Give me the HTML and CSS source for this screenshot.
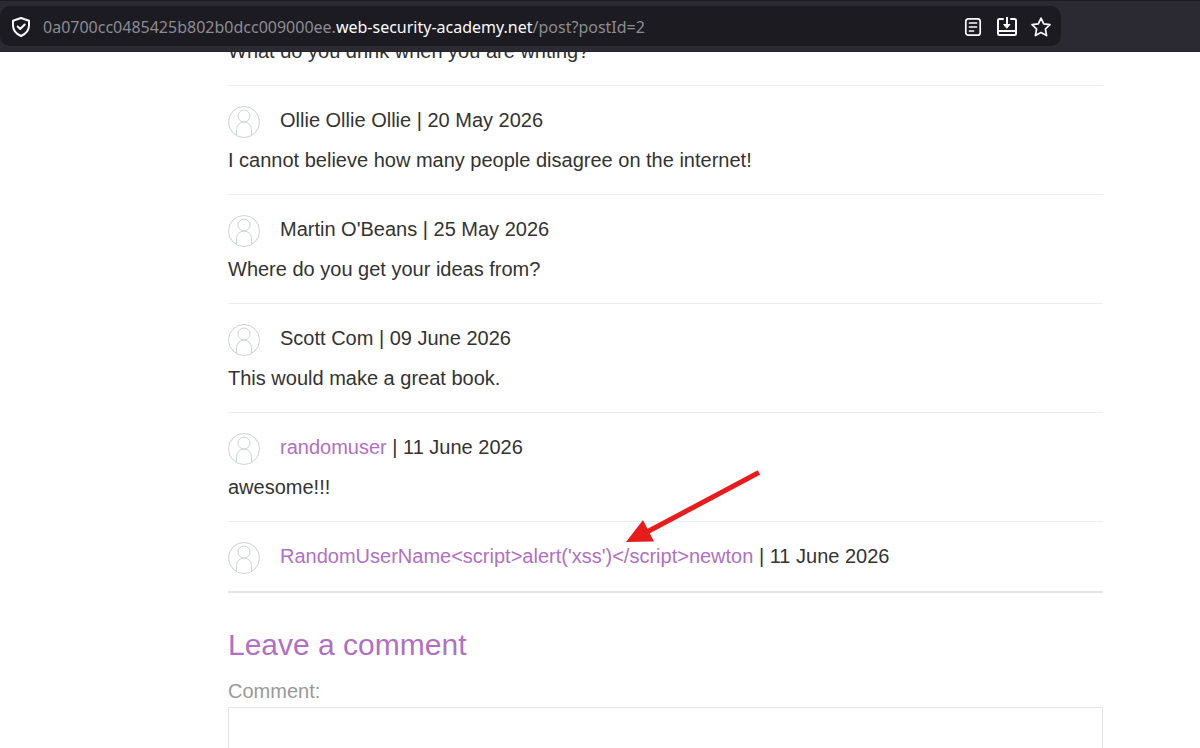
FILE: index.html
```html
<!DOCTYPE html>
<html lang="en">
<head>
    <meta charset="UTF-8">
    <meta name="viewport" content="width=device-width, initial-scale=1.0">
    <title>Blog post</title>
    <link rel="stylesheet" href="styles.css">
</head>
<body>
    <svg class="sprite" aria-hidden="true">
        <symbol id="avatar" viewBox="0 0 32 32">
            <circle cx="16" cy="16" r="15.500"/>
            <circle cx="16" cy="10" r="6"/>
            <path d="M8.500 29.500V23.500a7.500 7.500 0 0 1 15 0V29.500"/>
        </symbol>
    </svg>

    <header class="toolbar">
        <div class="address-bar">
            <button class="icon-button" type="button" aria-label="Site information">
                <svg width="20" height="20" viewBox="0 0 20 20" stroke-width="2">
                    <path d="M10 1L18 3.800V8.500C18 13.500 14.500 17 10 19C5.500 17 2 13.500 2 8.500V3.800Z"/>
                    <path d="M6.700 9.500L9.200 12L13.700 7.500"/>
                </svg>
            </button>
            <div class="url">0a0700cc0485425b802b0dcc009000ee.<span class="domain">web-security-academy.net</span>/post?postId=2</div>
            <div class="actions">
                <button class="icon-button" type="button" aria-label="Reader view">
                    <svg width="20" height="20" viewBox="0 0 20 20" stroke-width="1.700">
                        <rect x="2.800" y="1.800" width="14.400" height="16.400" rx="2.500"/>
                        <path d="M6.500 6H13.500M6.500 10H13.500M6.500 14H10.500"/>
                    </svg>
                </button>
                <button class="icon-button" type="button" aria-label="Save page">
                    <svg width="20" height="20" viewBox="0 0 20 20" stroke-width="2">
                        <path d="M6 2H2.500Q1 2 1 3.500V16.500Q1 18 2.500 18H17.500Q19 18 19 16.500V3.500Q19 2 17.500 2H14"/>
                        <path d="M1 14H19M10 0V8"/>
                        <path d="M7 7.500H13L10 11Z" fill="currentColor" stroke-width="1"/>
                    </svg>
                </button>
                <button class="icon-button" type="button" aria-label="Bookmark this page">
                    <svg width="20" height="20" viewBox="0 0 20 20" stroke-width="1.700">
                        <path d="M10 1.200L12.700 6.800L19 7.600L14.400 12L15.600 18.600L10 15.600L4.400 18.600L5.600 12L1 7.600L7.300 6.800Z"/>
                    </svg>
                </button>
            </div>
        </div>
    </header>

    <main class="page">
        <section class="comments">
            <article class="comment">
                <p>What do you drink when you are writing?</p>
            </article>
            <article class="comment">
                <div class="author"><svg class="avatar"><use href="#avatar"/></svg><span>Ollie Ollie Ollie | 20 May 2026</span></div>
                <p>I cannot believe how many people disagree on the internet!</p>
            </article>
            <article class="comment">
                <div class="author"><svg class="avatar"><use href="#avatar"/></svg><span>Martin O'Beans | 25 May 2026</span></div>
                <p>Where do you get your ideas from?</p>
            </article>
            <article class="comment">
                <div class="author"><svg class="avatar"><use href="#avatar"/></svg><span>Scott Com | 09 June 2026</span></div>
                <p>This would make a great book.</p>
            </article>
            <article class="comment">
                <div class="author"><svg class="avatar"><use href="#avatar"/></svg><span><a href="#">randomuser</a> | 11 June 2026</span></div>
                <p>awesome!!!</p>
            </article>
            <article class="comment last">
                <div class="author"><svg class="avatar"><use href="#avatar"/></svg><span><a href="#">RandomUserName&lt;script&gt;alert('xss')&lt;/script&gt;newton</a> | 11 June 2026</span></div>
                <svg class="arrow" width="134" height="74" viewBox="0 0 134 74" aria-hidden="true">
                    <path d="M133 2.500L19 63" stroke="#e81c1c" stroke-width="5"/>
                    <path d="M0 72L17 50L28 71.500Z" fill="#e81c1c"/>
                </svg>
            </article>
        </section>

        <form class="comment-form">
            <h2>Leave a comment</h2>
            <label for="comment">Comment:</label>
            <textarea id="comment" name="comment" rows="12"></textarea>
        </form>
    </main>
</body>
</html>
```

FILE: styles.css
```css
/* General styles */
* {
    margin: 0;
    padding: 0;
    box-sizing: border-box;
}

body {
    display: flex;
    flex-direction: column;
    height: 100vh;
    overflow: hidden;
    font-family: Arial, "Liberation Sans", sans-serif;
    font-size: 20px;
    line-height: 28px;
    color: #333332;
    background-color: #fff;
}

a {
    color: #b070c4;
    text-decoration: none;
}

.sprite {
    display: none;
}

/* Browser bar */
.toolbar {
    flex: none;
    padding: 5px 139px 5px 0;
    background-color: #2b2a33;
    border-top: 1px solid #1c1b22;
    border-bottom: 1px solid #25242c;
}

.address-bar {
    display: flex;
    align-items: center;
    gap: 12px;
    height: 40px;
    padding: 2px 10px 0 11px;
    background-color: #1c1b22;
    border-radius: 10px;
}

.url {
    flex: 1;
    font-family: "Segoe UI", "Noto Sans", sans-serif;
    font-size: 16px;
    white-space: nowrap;
    color: #8c8c91;
}

.domain {
    color: #fbfbfe;
}

.actions {
    display: flex;
    gap: 14px;
}

.icon-button {
    display: flex;
    border: none;
    background: none;
    color: #fbfbfe;
    cursor: pointer;
}

.icon-button svg {
    fill: none;
    stroke: currentColor;
    stroke-linecap: round;
    stroke-linejoin: round;
}

/* Blog page */
.page {
    flex: 1;
    min-height: 0;
    overflow: hidden;
    padding: 0 97px 0 228px;
}

.comments {
    margin-top: -36px;
    border-bottom: 2px solid #e5e5e5;
}

.comment {
    position: relative;
    padding: 20px 0;
    border-top: 1px solid #ebeeee;
}

.comment.last {
    padding-bottom: 17px;
}

.author {
    display: flex;
    gap: 20px;
    height: 32px;
}

.author + p {
    margin-top: 8px;
}

.avatar {
    width: 32px;
    height: 32px;
    fill: none;
    stroke: #cdd2d2;
    stroke-width: 1;
}

.arrow {
    position: absolute;
    left: 398px;
    top: -52px;
    fill: none;
}

/* Comment form */
.comment-form h2 {
    margin: 32px 0 12px;
    font-size: 30px;
    font-weight: normal;
    line-height: 40px;
    color: #b070c4;
}

.comment-form label {
    display: block;
    margin-bottom: 2px;
    color: #999;
}

.comment-form textarea {
    display: block;
    width: 100%;
    padding: 8px;
    border: 1px solid #e5e5e5;
    font: inherit;
    resize: none;
}
```
